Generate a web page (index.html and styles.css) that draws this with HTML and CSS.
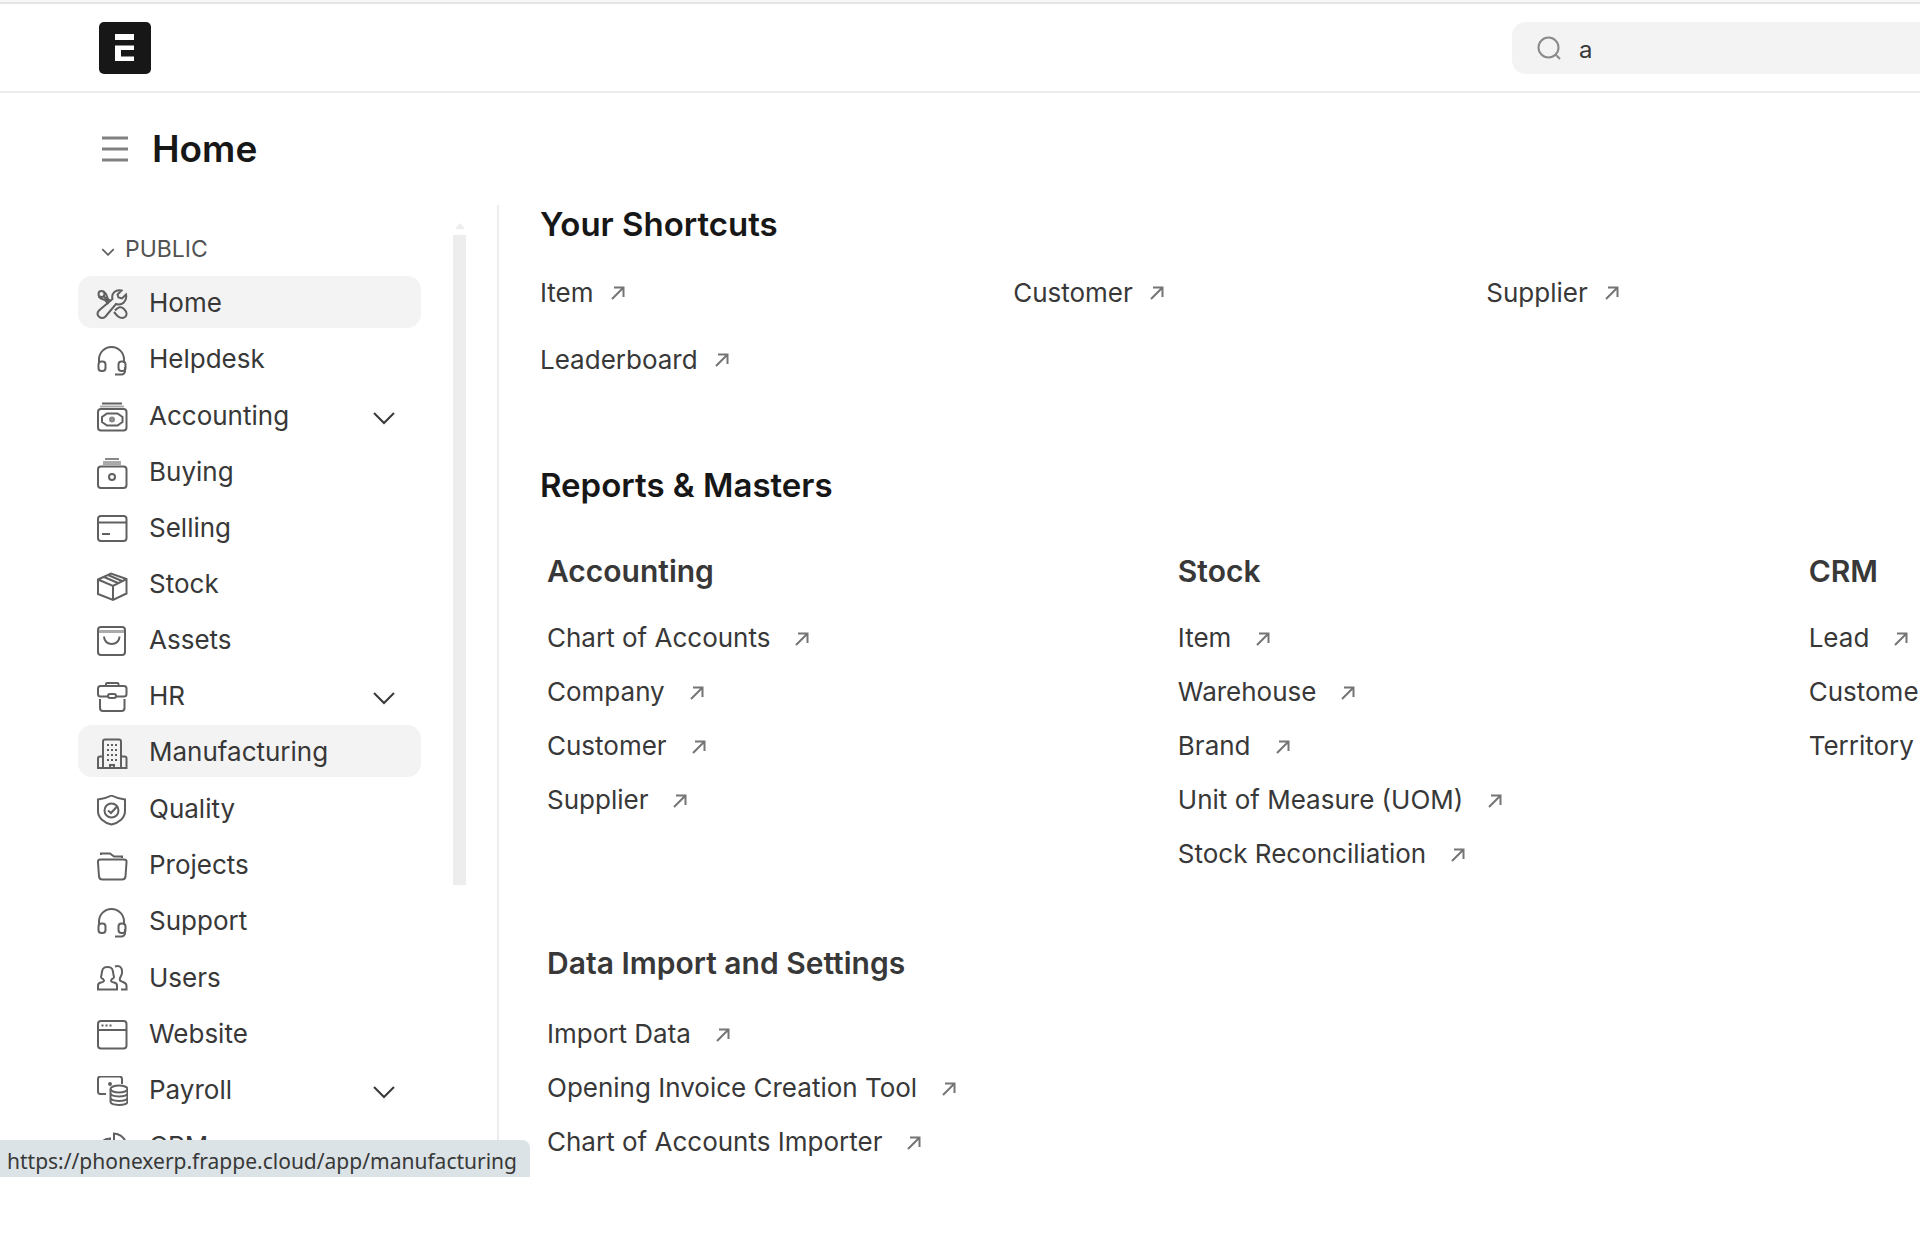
FILE: index.html
```html
<!DOCTYPE html>
<html lang="en">
<head>
<meta charset="utf-8">
<meta name="viewport" content="width=device-width, initial-scale=1">
<title>Home</title>
<link rel="stylesheet" href="styles.css">
</head>
<body>
<svg class="sprite" aria-hidden="true">
  <symbol id="arrow" viewBox="0 0 14 14"><path d="M1 13L12 2M3 1.5H12.5V11" /></symbol>
  <symbol id="chevron" viewBox="0 0 24 14"><path d="M2 2L12 12L22 2" /></symbol>
  <symbol id="headset" viewBox="0 0 32 32"><path d="M3 18V14.500a12.500 12.500 0 0 1 25 0V18M29 22v4a3.500 3.500 0 0 1-3.500 3.500H19" /><rect x="2.500" y="16.500" width="7" height="9.500" rx="3" /><rect x="22.500" y="16.500" width="7" height="9.500" rx="3" /></symbol>
</svg>
<div class="app">
  <header class="navbar">
    <a class="logo" href="#" aria-label="ERPNext home">
      <svg viewBox="0 0 52 52" width="52" height="52"><rect width="52" height="52" rx="5" fill="#171717"/><path d="M16 12H35V18H16ZM16 23.500H35V28H22V34.500H35V39H16Z" fill="#fff"/></svg>
    </a>
    <label class="search">
      <svg viewBox="0 0 24 24" width="24" height="24"><circle cx="11.500" cy="11.500" r="10"/><path d="M18.500 18.500L23 23"/></svg>
      <input type="text" value="a" aria-label="Search">
    </label>
  </header>

  <div class="page-head">
    <button class="menu" type="button" aria-label="Toggle sidebar"><svg viewBox="0 0 26 28" width="26" height="28"><path d="M0 3H26M0 14H26M0 25H26"/></svg></button>
    <h1>Home</h1>
  </div>

  <div class="page-body">
    <aside class="sidebar">
      <nav class="nav">
        <button class="nav-title" type="button"><svg width="14" height="8"><use href="#chevron"/></svg>PUBLIC</button>
        <ul>
          <li><a class="active" href="#"><svg class="icon" viewBox="0 0 32 32"><circle cx="5.500" cy="5" r="3"/><path d="M8 7.500L13 13M7.500 2.500L10 5L12 10L15 12.500M2.500 7.500L5 9.500L9 11L12.500 15"/><path d="M25.500 1.500C20 0 15 4 16.500 10L3 21.500C-1 26 5 31.500 9.500 27.500L20 15C26 17 31.500 12 30 5.500L26 9.500L22.500 8.500L21.500 5.500Z"/><path d="M19 21.500C22 18 25 17 28 20C31 23 31.500 26 29 28C26 30 23 28.500 21 26.500L18 23"/></svg>Home</a></li>
          <li><a href="#"><svg class="icon"><use href="#headset"/></svg>Helpdesk</a></li>
        </ul>
        <ul>
          <li><a href="#"><svg class="icon" viewBox="0 0 32 32"><path d="M6 1.500H26" /><path d="M4 4.500H28" stroke="#aaa"/><rect x="2" y="7" width="28.500" height="21.500" rx="3"/><path d="M11 11.500H21.500L26.500 15V20L21.500 23.500H11L6 20V15Z"/><circle cx="16" cy="17.500" r="2" fill="#999" stroke="#888"/></svg>Accounting<svg class="chev"><use href="#chevron"/></svg></a></li>
          <li><a href="#"><svg class="icon" viewBox="0 0 32 32"><path d="M9 1H23" stroke="#888"/><path d="M7 5H25" stroke="#aaa" stroke-width="4"/><rect x="2" y="8.500" width="28.500" height="21.500" rx="3"/><circle cx="16" cy="19" r="3"/></svg>Buying</a></li>
          <li><a href="#"><svg class="icon" viewBox="0 0 32 32"><rect x="2" y="2" width="28.500" height="25" rx="3"/><path d="M2 8.500H30M6 20H14"/></svg>Selling</a></li>
          <li><a href="#"><svg class="icon" viewBox="0 0 32 32"><path d="M2 9.500L15 3.500L30.500 9V23.500L17 30L2 24ZM2 9.500L17 16L30.500 9M17 16V30M8 7L22 13M12 5L26 11"/></svg>Stock</a></li>
          <li><a href="#"><svg class="icon" viewBox="0 0 32 32"><rect x="2" y="1" width="27" height="28" rx="3"/><path d="M3 5.500H28" stroke="#aaa" stroke-width="3"/><path d="M8 10.500C8 20.500 23.500 20.500 23.500 10.500"/></svg>Assets</a></li>
          <li><a href="#"><svg class="icon" viewBox="0 0 32 32"><rect x="10" y="1" width="12.500" height="3" rx="1"/><path d="M12 14.500H4.500Q2 14.500 2 12V6.500Q2 4 4.500 4H28Q30.500 4 30.500 6.500V12Q30.500 14.500 28 14.500H20"/><rect x="12" y="12" width="8" height="4" rx="2"/><path d="M4 17V26Q4 29 7 29H25.500Q28.500 29 28.500 26V17"/></svg>HR<svg class="chev"><use href="#chevron"/></svg></a></li>
          <li><a class="hover" href="#"><svg class="icon" viewBox="0 0 32 32"><path d="M7 30V3.500Q7 1.500 9 1.500H23Q25 1.500 25 3.500V30M7 18.500H4Q2 18.500 2 20.500V30H30.500V20.500Q30.500 18.500 28.500 18.500H25M14 30V27H18V30"/><path d="M11 7H13M15 7H17M19 7H21M11 12H13M15 12H17M19 12H21M11 17H13M15 17H17M19 17H21M11 22H13M15 22H17M19 22H21" stroke-width="2"/></svg>Manufacturing</a></li>
        </ul>
        <ul>
          <li><a href="#"><svg class="icon" viewBox="0 0 32 32"><path d="M15.500 .5C11 3 7 4 2 4.500V16C2 23 8 28 15.500 29.500C23 28 29 23 29 16V4.500C24 4 20 3 15.500 .5Z"/><circle cx="15.500" cy="15.500" r="7"/><path d="M12 15.500L15 18L21 11.500"/></svg>Quality</a></li>
          <li><a href="#"><svg class="icon" viewBox="0 0 32 32"><path d="M5 4V2.500H14L18 5.500H26V7"/><path d="M4.500 8.500H28Q31 8.500 30.500 11.500L29.500 25.500Q29 28.500 26 28.500H6.500Q3.500 28.500 3 25.500L2 11.500Q1.500 8.500 4.500 8.500Z"/></svg>Projects</a></li>
          <li><a href="#"><svg class="icon"><use href="#headset"/></svg>Support</a></li>
        </ul>
        <ul>
          <li><a href="#"><svg class="icon" viewBox="0 0 32 32"><path d="M2 25.500V21.500Q2 19 5 18.500C8 18 9 17 7 15Q4 14 5.500 11C6 5 7 3 11.500 3S17 5 17.500 11Q19 14 16 15C14 17 15 18 18 18.500Q21 19 21 21.500V25.500Z"/><path d="M19 2.500C24 .5 26.500 4 26 9C26 12 22 15 24.500 17L28 18.500Q30.500 19.500 30.500 22V25.500H25"/></svg>Users</a></li>
          <li><a href="#"><svg class="icon" viewBox="0 0 32 32"><rect x="2" y="1" width="28.500" height="27.500" rx="3"/><path d="M2 10H30.500M5.500 5.500H7.500M9.500 5.500H11.500M13.500 5.500H15.500"/></svg>Website</a></li>
          <li><a href="#"><svg class="icon" viewBox="0 0 32 32"><path d="M10 18H4.500Q2 18 2 15.500V3Q2 .5 4.500 .5H23.500Q26 .5 26 3V8"/><circle cx="14" cy="8" r="1"/><ellipse cx="23" cy="13" rx="8.500" ry="3.500"/><path d="M14.500 13V25.500C14.500 30 31.500 30 31.500 25.500V13M14.500 17C14.500 21.500 31.500 21.500 31.500 17M14.500 21.500C14.500 26 31.500 26 31.500 21.500"/></svg>Payroll<svg class="chev"><use href="#chevron"/></svg></a></li>
          <li><a href="#"><svg class="icon" viewBox="0 0 32 32"><path d="M18 8V1.500Q26 2 30 10V20M14 6.500Q5 7 3 16A13 13 0 0 0 16 29Q26 29 28 20H14Z"/></svg>CRM</a></li>
        </ul>
      </nav>
      <div class="scroll" aria-hidden="true"><span class="scroll-up"></span><span class="scroll-track"><span class="scroll-thumb"></span></span></div>
    </aside>

    <main class="content">
      <h2>Your Shortcuts</h2>
      <div class="shortcuts">
        <a href="#">Item<svg class="arrow"><use href="#arrow"/></svg></a>
        <a href="#">Customer<svg class="arrow"><use href="#arrow"/></svg></a>
        <a href="#">Supplier<svg class="arrow"><use href="#arrow"/></svg></a>
        <a href="#">Leaderboard<svg class="arrow"><use href="#arrow"/></svg></a>
      </div>
      <h2 class="masters-title">Reports &amp; Masters</h2>
      <div class="cards">
        <section class="card">
          <h3>Accounting</h3>
          <a href="#">Chart of Accounts<svg class="arrow"><use href="#arrow"/></svg></a>
          <a href="#">Company<svg class="arrow"><use href="#arrow"/></svg></a>
          <a href="#">Customer<svg class="arrow"><use href="#arrow"/></svg></a>
          <a href="#">Supplier<svg class="arrow"><use href="#arrow"/></svg></a>
        </section>
        <section class="card">
          <h3>Stock</h3>
          <a href="#">Item<svg class="arrow"><use href="#arrow"/></svg></a>
          <a href="#">Warehouse<svg class="arrow"><use href="#arrow"/></svg></a>
          <a href="#">Brand<svg class="arrow"><use href="#arrow"/></svg></a>
          <a href="#">Unit of Measure (UOM)<svg class="arrow"><use href="#arrow"/></svg></a>
          <a href="#">Stock Reconciliation<svg class="arrow"><use href="#arrow"/></svg></a>
        </section>
        <section class="card">
          <h3>CRM</h3>
          <a href="#">Lead<svg class="arrow"><use href="#arrow"/></svg></a>
          <a href="#">Customer</a>
          <a href="#">Territory</a>
        </section>
        <section class="card card-wide">
          <h3>Data Import and Settings</h3>
          <a href="#">Import Data<svg class="arrow"><use href="#arrow"/></svg></a>
          <a href="#">Opening Invoice Creation Tool<svg class="arrow"><use href="#arrow"/></svg></a>
          <a href="#">Chart of Accounts Importer<svg class="arrow"><use href="#arrow"/></svg></a>
        </section>
      </div>
    </main>
  </div>
  <div class="status">https://phonexerp.frappe.cloud/app/manufacturing</div>
</div>
</body>
</html>
```
FILE: styles.css
```css
* { box-sizing: border-box; }

body {
  margin: 0;
  background: #fff;
  color: #383838;
  font-family: Inter, "Liberation Sans", sans-serif;
  font-size: 26px;
  overflow: hidden;
}

a { color: inherit; text-decoration: none; }
ul { list-style: none; margin: 0; padding: 0; }
h1, h2, h3 { margin: 0; font-weight: 600; }
button { border: 0; padding: 0; background: none; font: inherit; color: inherit; }
svg { flex: none; fill: none; stroke: #606060; stroke-width: 2; }
.sprite { position: absolute; width: 0; height: 0; }

.app {
  position: relative;
  display: flex;
  flex-direction: column;
  height: calc(100vh - 72px);
  overflow: hidden;
  border-top: 2px solid #f7f7f7;
}

/* Top bar */
.navbar {
  display: flex;
  justify-content: space-between;
  align-items: center;
  height: 91px;
  flex: none;
  padding-left: 99px;
  border-top: 2px solid #e5e5e5;
  border-bottom: 2px solid #ededed;
}
.logo { display: flex; }
.logo svg { stroke: none; }
.search {
  display: flex;
  align-items: center;
  gap: 18px;
  width: 408px;
  height: 52px;
  padding-left: 25px;
  border-radius: 14px 0 0 14px;
  background: #f3f3f3;
}
.search svg { stroke: #8a8a8a; }
.search input {
  flex: 1;
  min-width: 0;
  border: 0;
  padding: 3px 0 0;
  outline: 0;
  background: none;
  font: inherit;
  font-size: 24px;
  color: #383838;
}

/* Title row */
.page-head {
  display: flex;
  align-items: center;
  gap: 24px;
  height: 112px;
  flex: none;
  padding-left: 102px;
}
.menu { display: flex; }
.menu svg { stroke: #808080; stroke-width: 3; }
h1 { font-size: 37px; line-height: 44px; color: #171717; }

.page-body { display: flex; flex: 1; min-height: 0; }

/* Sidebar */
.sidebar {
  display: flex;
  flex: none;
  width: 499px;
  padding: 18px 31px 0 78px;
  gap: 32px;
  overflow: hidden;
  border-right: 2px solid #ededed;
}
.nav { display: flex; flex-direction: column; flex: 1; gap: 5px; }
.nav ul { display: flex; flex-direction: column; gap: 4px; }
.nav-title {
  display: flex;
  align-items: center;
  gap: 10px;
  height: 48px;
  padding: 3px 0 0 23px;
  font-size: 23px;
  color: #525252;
}
.nav-title svg { margin-top: 6px; stroke-width: 3; }
.nav li a {
  display: flex;
  align-items: center;
  height: 52px;
  padding: 0 25px 0 18px;
  border-radius: 14px;
}
.nav a.active, .nav a.hover { background: #f3f3f3; }
.icon { width: 32px; height: 32px; margin: 6px 21px 0 0; }
.chev { width: 24px; height: 14px; margin: 6px 0 0 auto; stroke: #383838; }

.scroll { display: flex; flex-direction: column; align-items: center; gap: 6px; width: 13px; }
.scroll-up { border: 5px solid transparent; border-top: 0; border-bottom: 6px solid #ededed; }
.scroll-track { flex: 1; width: 13px; }
.scroll-thumb { display: block; height: 69%; background: #ededed; }

/* Workspace */
.content { flex: 1; min-width: 0; padding-left: 41px; white-space: nowrap; }
.content a { display: flex; align-items: center; }
.arrow { width: 14px; height: 14px; margin: 1px 0 0 17px; stroke: #757575; }
h2 { font-size: 33px; line-height: 38px; color: #171717; }
.shortcuts {
  display: grid;
  grid-template-columns: 12fr 12fr 11fr;
  grid-auto-rows: 67px;
  margin-top: 16px;
}
.masters-title { margin-top: 73px; }
.cards {
  display: grid;
  grid-template-columns: 17fr 17fr 3fr;
  row-gap: 64px;
  margin-top: 48px;
  padding-left: 7px;
}
.card { min-width: 0; }
.card h3 { font-size: 30px; line-height: 38px; margin-bottom: 20px; }
.card a { height: 54px; }
.card .arrow { margin: 3px 0 0 25px; }
.card-wide h3 { margin-bottom: 24px; }

/* Link target preview */
.status {
  position: absolute;
  left: 0;
  bottom: 0;
  height: 37px;
  padding: 0 13px 0 7px;
  border-radius: 0 8px 0 0;
  background: #dbe3e6;
  font-family: "Noto Sans", "Open Sans", sans-serif;
  font-size: 21px;
  line-height: 43px;
}
```
